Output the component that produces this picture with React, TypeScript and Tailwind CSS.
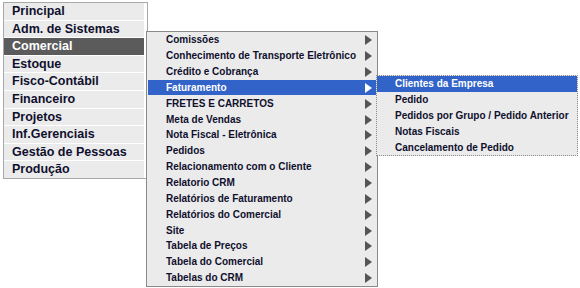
const mainItems = [
  'Principal',
  'Adm. de Sistemas',
  'Comercial',
  'Estoque',
  'Fisco-Contábil',
  'Financeiro',
  'Projetos',
  'Inf.Gerenciais',
  'Gestão de Pessoas',
  'Produção',
];

const subItems = [
  'Comissões',
  'Conhecimento de Transporte Eletrônico',
  'Crédito e Cobrança',
  'Faturamento',
  'FRETES E CARRETOS',
  'Meta de Vendas',
  'Nota Fiscal - Eletrônica',
  'Pedidos',
  'Relacionamento com o Cliente',
  'Relatorio CRM',
  'Relatórios de Faturamento',
  'Relatórios do Comercial',
  'Site',
  'Tabela de Preços',
  'Tabela do Comercial',
  'Tabelas do CRM',
];

const fatItems = [
  'Clientes da Empresa',
  'Pedido',
  'Pedidos por Grupo / Pedido Anterior',
  'Notas Fiscais',
  'Cancelamento de Pedido',
];

const Arrow = ({ active }: { active: boolean }) => (
  <svg width="7" height="10" viewBox="0 0 7 10" className="shrink-0">
    <polygon points="0,0 7,5 0,10" fill={active ? '#ffffff' : '#555555'} />
  </svg>
);

export default function App() {
  return (
    <div className="relative w-[580px] h-[288px] bg-white overflow-hidden font-['Liberation_Sans',Arial,sans-serif] font-bold">
      {/* Main menu */}
      <div className="absolute left-[3px] top-[2px] w-[145px] flex flex-col gap-px bg-white border border-[#a8a8a8]">
        {mainItems.map((item) => {
          const active = item === 'Comercial';
          return (
            <div
              key={item}
              className={`h-[16.6px] flex items-center pl-[8px] mr-[3px] text-[12.5px] leading-none ${
                active ? 'bg-[#5b5b5b] text-white' : 'bg-[#ebebeb] text-[#10102e]'
              }`}
            >
              {item}
            </div>
          );
        })}
      </div>

      {/* Comercial submenu */}
      <div className="absolute left-[146px] top-[31px] w-[232px] flex flex-col bg-[#ebebeb] border border-[#8a8a8a] pl-px">
        {subItems.map((item) => {
          const active = item === 'Faturamento';
          return (
            <div
              key={item}
              className={`h-[15.85px] flex items-center justify-between pl-[18px] pr-[5px] pt-px text-[10px] leading-none ${
                active ? 'bg-[#3163c9] text-white' : 'text-[#10102e]'
              }`}
            >
              <span>{item}</span>
              <Arrow active={active} />
            </div>
          );
        })}
      </div>

      {/* Faturamento submenu */}
      <div className="absolute left-[376px] top-[75px] w-[202px] flex flex-col bg-[#ebebeb] border border-dotted border-[#8a8a8a]">
        {fatItems.map((item) => {
          const active = item === 'Clientes da Empresa';
          return (
            <div
              key={item}
              className={`h-[15.8px] flex items-center pl-[18px] pt-px text-[10px] leading-none ${
                active ? 'bg-[#3163c9] text-white' : 'text-[#10102e]'
              }`}
            >
              {item}
            </div>
          );
        })}
      </div>
    </div>
  );
}
